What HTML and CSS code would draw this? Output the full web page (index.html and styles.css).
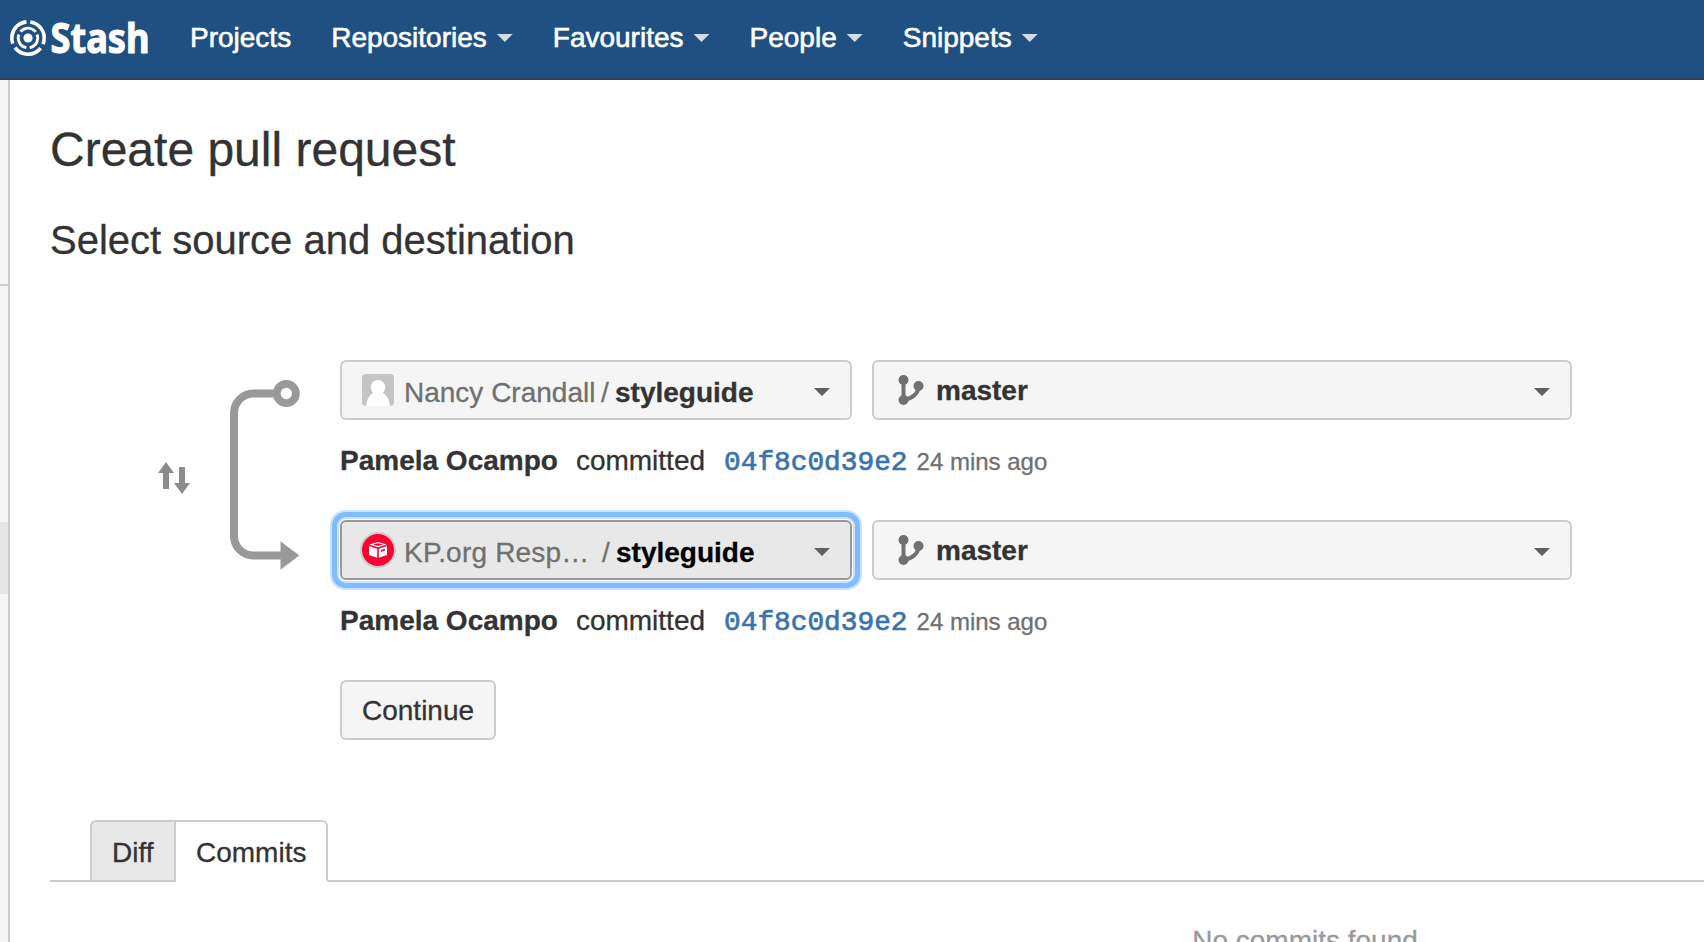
FILE: index.html
```html
<!DOCTYPE html>
<html lang="en">
<head>
<meta charset="utf-8">
<title>Create pull request - Stash</title>
<link rel="stylesheet" href="styles.css">
</head>
<body>
<header class="header">
  <a class="logo" aria-label="Stash">
    <svg width="160" height="78" viewBox="0 0 160 78">
      <g fill="none" stroke="#fff">
        <circle cx="28" cy="38" r="16.2" stroke-width="3.6" stroke-dasharray="29.4 4.53" transform="rotate(-82 28 38)"/>
        <circle cx="28" cy="38" r="9.8" stroke-width="2.9" stroke-dasharray="17.2 3.32" transform="rotate(-21 28 38)"/>
      </g>
      <circle cx="28" cy="38" r="4.6" fill="#fff"/>
      <text class="logo-text" x="50.5" y="52.5" textLength="99" lengthAdjust="spacingAndGlyphs">Stash</text>
    </svg>
  </a>
  <nav class="nav">
    <a>Projects</a>
    <a>Repositories<i class="caret"></i></a>
    <a>Favourites<i class="caret"></i></a>
    <a>People<i class="caret"></i></a>
    <a>Snippets<i class="caret"></i></a>
  </nav>
</header>
<div class="page">
  <aside class="sidebar">
    <div class="side-actions"></div>
    <div class="side-nav"></div>
    <div class="side-current"></div>
  </aside>
  <main class="content">
    <h1>Create pull request</h1>
    <h2>Select source and destination</h2>
    <section class="chooser">
      <svg class="flow" width="290" height="240" viewBox="50 360 290 240">
        <path d="M274 393.5H253.5A19.5 19.5 0 0 0 234 413V536A19.5 19.5 0 0 0 253.5 555.5H281" fill="none" stroke="#999" stroke-width="8"/>
        <circle cx="286.3" cy="393.5" r="9.6" fill="#fff" stroke="#999" stroke-width="7.8"/>
        <path d="M280.5 541.2L299.3 555.5L280.5 569.8Z" fill="#999"/>
        <path d="M166 462L174 473H169V489H163V473H158ZM179 467H185V483H190L182 494L174 483H179Z" fill="#8c8c8c"/>
      </svg>
      <div class="rows">
        <div class="row">
          <button class="select repo">
            <svg width="36" height="36" viewBox="0 0 36 36">
              <rect x="2" y="2" width="32" height="32" rx="4" fill="#c4c4c4"/>
              <circle cx="18" cy="15.3" r="7.3" fill="#fff"/>
              <path d="M6 34C7 26.500 10 22 14 20.500H22C26 22 29 26.500 30 34Z" fill="#fff"/>
            </svg>
            <span class="owner">Nancy Crandall</span><span class="slash">/</span><b>styleguide</b>
            <i class="caret"></i>
          </button>
          <button class="select branch">
            <svg width="28" height="32" viewBox="0 0 28 32">
              <path d="M5.500 6V26M20.500 12C20.500 19 15 24.500 5.500 26" fill="none" stroke="#707070" stroke-width="4"/>
              <g fill="#707070"><circle cx="5.500" cy="6" r="5"/><circle cx="5.500" cy="26" r="5"/><circle cx="20.500" cy="12" r="5"/></g>
            </svg>
            <b>master</b><i class="caret"></i>
          </button>
        </div>
        <p class="commit"><b>Pamela Ocampo</b><span class="verb">committed</span><a class="hash">04f8c0d39e2</a><time>24 mins ago</time></p>
        <div class="row">
          <button class="select repo focused">
            <svg width="36" height="36" viewBox="0 0 36 36">
              <circle cx="18" cy="18" r="18" fill="#ccc"/>
              <circle cx="18" cy="18" r="16" fill="#ff0033"/>
              <path d="M9.200 12.500L18 10L26.800 12.500L18 15.300ZM9 14L17.200 16.700V25.700L9 23ZM27 14V23L18.800 25.700V16.700Z" fill="#fff"/>
              <path d="M13 12.500L18 11.300L23 12.500L18 13.900ZM21 18L25 16.700V18.600L21 20Z" fill="#ff0033"/>
            </svg>
            <span class="owner">KP.org Resp…</span><span class="slash">/</span><b>styleguide</b>
            <i class="caret"></i>
          </button>
          <button class="select branch">
            <svg width="28" height="32" viewBox="0 0 28 32">
              <path d="M5.500 6V26M20.500 12C20.500 19 15 24.500 5.500 26" fill="none" stroke="#707070" stroke-width="4"/>
              <g fill="#707070"><circle cx="5.500" cy="6" r="5"/><circle cx="5.500" cy="26" r="5"/><circle cx="20.500" cy="12" r="5"/></g>
            </svg>
            <b>master</b><i class="caret"></i>
          </button>
        </div>
        <p class="commit"><b>Pamela Ocampo</b><span class="verb">committed</span><a class="hash">04f8c0d39e2</a><time>24 mins ago</time></p>
        <button class="continue">Continue</button>
      </div>
    </section>
    <div class="tabs">
      <a class="tab">Diff</a>
      <a class="tab active">Commits</a>
    </div>
    <p class="empty">No commits found</p>
  </main>
</div>
</body>
</html>
```
FILE: styles.css
```css
* { box-sizing: border-box; }
body {
  margin: 0;
  height: 942px;
  overflow: hidden;
  background: #fff;
  color: #333;
  font: 28px "Liberation Sans", Arial, sans-serif;
  -webkit-text-stroke: .3px currentColor;
}
h1, h2, p { margin: 0; font-weight: 400; }
button { font: inherit; color: inherit; margin: 0; text-align: left; }

.header {
  display: flex;
  height: 80px;
  background: #205081;
  border-bottom: 2px solid #2e3d54;
  color: #fff;
}
.logo { display: block; width: 170px; height: 78px; }
.logo svg { display: block; }
.logo-text { font: 700 42px "Noto Sans", "Open Sans", sans-serif; fill: #fff; stroke: #fff; stroke-width: 1.1px; }
.nav { display: flex; height: 78px; line-height: 75px; -webkit-text-stroke: .6px #fff; }
.nav a { display: flex; align-items: flex-start; height: 78px; padding: 0 20px; }
.caret {
  flex: none;
  width: 16px;
  height: 8px;
  background: #606060;
  clip-path: polygon(0 0, 100% 0, 50% 100%);
}
.nav .caret { margin: 34px 0 0 10px; background: #d2dce6; }

.page { display: flex; height: 862px; overflow: hidden; }
.sidebar { flex: none; width: 10px; background: #f5f5f5; border-right: 2px solid #ccc; }
.side-actions { height: 206px; border-bottom: 2px solid #ccc; }
.side-nav { height: 236px; }
.side-current { height: 72px; background: #e6e6e6; }

.content { flex: none; width: 2550px; padding: 42px 0 0 40px; }
h1 { font-size: 48px; line-height: 56px; }
h2 { margin-top: 37px; font-size: 40px; line-height: 50px; }

.chooser { display: flex; margin-top: 95px; }
.flow { flex: none; display: block; }
.row { display: flex; gap: 20px; }
.select {
  display: flex;
  align-items: center;
  height: 60px;
  padding: 0 20px;
  background: #f5f5f5;
  border: 2px solid #ccc;
  border-radius: 6px;
  line-height: 56px;
}
.select .caret { margin: 4px 0 0 auto; }
.select svg { flex: none; }
.repo { width: 512px; padding-left: 18px; }
.repo .owner, .repo .slash, .repo b { padding-top: 6px; }
.owner { width: 197px; margin-left: 8px; color: #707070; white-space: nowrap; }
.slash { width: 14px; color: #707070; }
.branch { width: 700px; padding-left: 24px; }
.branch b { padding-top: 2px; }
.branch svg { margin: 0 10px 0 0; }
.focused {
  background: #e8e8e8;
  border-color: #999;
  color: #000;
  box-shadow: 0 0 0 1px #fff, 0 0 0 3px #c8e2ff, 0 0 0 8px #80bdff, 0 0 0 10px #c8e2ff;
}
.focused .owner { width: 198px; }
.focused .owner { letter-spacing: .2px; }
.commit { display: flex; height: 100px; line-height: 82px; }
.verb { margin-left: 18px; }
.hash {
  margin-left: 19px;
  padding-top: 2px;
  color: #3b73af;
  font-family: "Liberation Mono", "Courier New", monospace;
  font-size: 27.8px;
  -webkit-text-stroke: .7px #3b73af;
}
.commit time { margin-left: 9px; padding-top: 1px; font-size: 24px; color: #707070; }
.continue {
  display: block;
  height: 60px;
  padding: 1px 20px 0;
  width: 156px;
  background: #f5f5f5;
  border: 2px solid #ccc;
  border-radius: 6px;
  line-height: 56px;
}

.tabs { display: flex; height: 62px; margin-top: 80px; padding-left: 40px; box-shadow: inset 0 -2px #ccc; }
.tab {
  height: 62px;
  padding: 3px 20px 0;
  border: 2px solid #ccc;
  border-radius: 6px 0 0 0;
  background: #e8e8e8;
  line-height: 56px;
  width: 86px;
}
.tab.active {
  width: 152px;
  border-left: 0;
  border-bottom-color: #fff;
  border-radius: 0 6px 0 0;
  background: #fff;
}
.empty { padding-top: 39px; line-height: 40px; text-align: center; color: #999; }
```
